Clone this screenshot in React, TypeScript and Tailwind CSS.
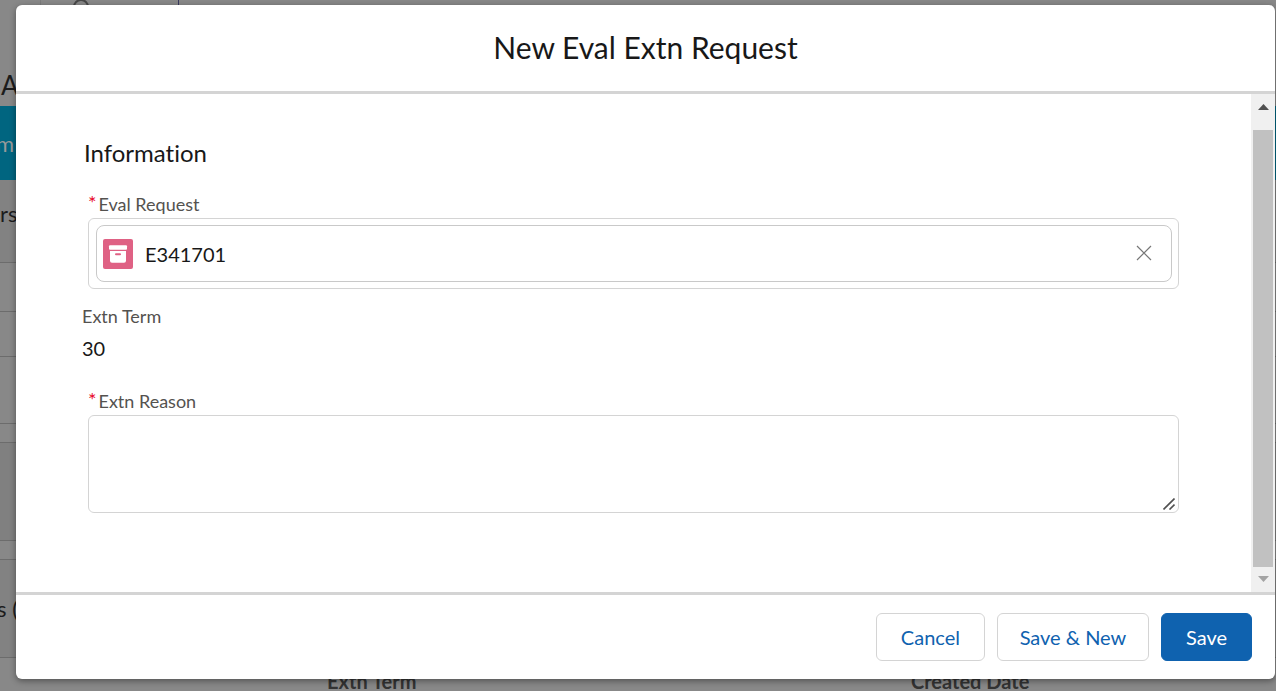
import React from "react";

function PageBehind() {
  return (
    <div aria-hidden="true" className="flex h-full flex-col overflow-hidden text-[#1c1c1c]">
      <div className="flex h-[66px] shrink-0 items-start">
        <div className="h-full w-[41px] border-r border-[#7b7b7b]" />
        <svg className="ml-8 h-6 w-4 shrink-0" viewBox="0 0 16 24" fill="none" stroke="#484848" strokeWidth="2">
          <circle cx="8" cy="7" r="7" />
        </svg>
        <div className="ml-[89px] h-[5px] w-px bg-[#3a3a60]" />
      </div>
      <div className="h-10 shrink-0 pl-px text-[26px] leading-[38px]">A</div>
      <div className="flex h-[74px] shrink-0 items-center bg-[#006580] text-[22px] text-[#9a9a9a]">
        <span className="-ml-1">m</span>
      </div>
      <div className="h-[83px] shrink-0 border-b border-[#6c6c6c] bg-[#828282] text-[22px] leading-[68px]">rs</div>
      <div className="h-[49px] shrink-0 border-b border-[#6c6c6c]" />
      <div className="h-[45px] shrink-0 border-b border-[#6c6c6c]" />
      <div className="h-[67px] shrink-0 border-b border-[#6c6c6c]" />
      <div className="h-[19px] shrink-0 border-b border-[#6c6c6c]" />
      <div className="h-[98px] shrink-0 border-b border-[#6c6c6c] bg-[#808080]" />
      <div className="h-[19px] shrink-0 border-b border-[#6c6c6c]" />
      <div className="h-[98px] shrink-0 border-b border-[#6c6c6c] bg-[#828282] text-[22px] leading-[98px]">
        <span className="-ml-[3px]">s (</span>
      </div>
      <div className="grid grid-cols-[327px_584px_1fr] text-xl leading-[46px] font-bold text-[#333]">
        <span />
        <span>Extn Term</span>
        <span>Created Date</span>
      </div>
    </div>
  );
}

function FieldLabel({ htmlFor, children }: { htmlFor: string; children: React.ReactNode }) {
  return (
    <label htmlFor={htmlFor} className="flex h-7 gap-[2px] text-lg leading-7 text-[#54524f]">
      <span className="text-xl leading-6 text-[#e8082c]">*</span>
      {children}
    </label>
  );
}

function ScrollBar() {
  return (
    <div aria-hidden="true" className="flex w-6 shrink-0 flex-col items-center bg-[#f0f0f0]">
      <svg className="h-9 w-6 shrink-0" viewBox="0 0 24 36" fill="#505050">
        <path d="M7 16 L12.5 10 L18 16Z" />
      </svg>
      <div className="w-5 flex-1 bg-[#c1c1c1]" />
      <svg className="h-[25px] w-6 shrink-0" viewBox="0 0 24 25" fill="#a3a3a3">
        <path d="M7 9 L12.5 15 L18 9Z" />
      </svg>
    </div>
  );
}

export default function App() {
  return (
    <div className="relative h-screen overflow-hidden bg-[#888] font-['Lato',sans-serif] [font-variant-ligatures:none]">
      <PageBehind />
      <div className="absolute inset-0 flex pt-[5px] pr-px pb-3 pl-4">
        <section
          role="dialog"
          aria-modal="true"
          aria-labelledby="dialog-title"
          className="flex min-w-0 flex-1 flex-col overflow-hidden rounded-md bg-white text-[#181818] shadow-[0_2px_6px_rgba(0,0,0,0.4)]"
        >
          <header className="border-b-3 border-[#d4d4d4] px-4 pt-5 pb-[22px] text-center">
            <h1 id="dialog-title" className="text-[30px] leading-[44px]">New Eval Extn Request</h1>
          </header>
          <div className="flex min-h-0 flex-1">
            <form id="request-form" className="min-w-0 flex-1 pt-11 pr-[72px] pl-[66px]">
              <h2 className="pl-[2px] text-2xl leading-[30px]">Information</h2>
              <div className="mt-[22px] pl-[6px]">
                <FieldLabel htmlFor="eval-request">Eval Request</FieldLabel>
                <div className="rounded-md border border-[#d4d4d4] py-[6px] pr-[6px] pl-[7px]">
                  <div className="flex h-[57px] items-center rounded-lg border border-[#c9c9c9] pt-px pr-[18px] pl-[6px]">
                    <svg className="h-[30px] w-[30px] shrink-0" viewBox="0 0 30 30">
                      <rect width="30" height="30" rx="2" fill="#df6184" />
                      <rect x="6" y="6.3" width="18" height="4.4" rx="1" fill="#fff" />
                      <path d="M7 12h16v9.8a2 2 0 0 1-2 2H9a2 2 0 0 1-2-2z" fill="#fff" />
                      <rect x="12" y="14.2" width="6" height="2" rx="1" fill="#df6184" />
                    </svg>
                    <input
                      id="eval-request"
                      readOnly
                      defaultValue="E341701"
                      className="ml-3 min-w-0 flex-1 text-xl leading-7 outline-none"
                    />
                    <button type="button" aria-label="Clear selection" className="px-px pb-[2px]">
                      <svg className="h-4 w-4" viewBox="0 0 16 16" stroke="#777" strokeWidth="1.2">
                        <path d="M1 1 L15 15 M15 1 L1 15" />
                      </svg>
                    </button>
                  </div>
                </div>
              </div>
              <dl className="mt-[15px]">
                <dt className="text-lg leading-6 text-[#54524f]">Extn Term</dt>
                <dd className="mt-1 text-xl leading-8">30</dd>
              </dl>
              <div className="mt-[23px] pl-[6px]">
                <FieldLabel htmlFor="extn-reason">Extn Reason</FieldLabel>
                <div className="relative">
                  <textarea
                    id="extn-reason"
                    className="block h-[98px] w-full resize-none rounded-md border border-[#d4d4d4] p-3 text-xl outline-none"
                  />
                  <svg className="pointer-events-none absolute right-1 bottom-[3px] h-3 w-3" viewBox="0 0 12 12" stroke="#505050" strokeWidth="1.6">
                    <path d="M0.5 11.5 L11.5 0.5 M6.5 11.5 L11.5 6.5" />
                  </svg>
                </div>
              </div>
            </form>
            <ScrollBar />
          </div>
          <footer className="flex justify-end gap-3 border-t-3 border-[#d4d4d4] pt-[18px] pr-[23px] pb-[18px] text-xl text-[#0f62af]">
            <button type="button" className="h-12 rounded-md border border-[#d4d4d4] px-6">Cancel</button>
            <button type="button" className="h-12 w-[152px] rounded-md border border-[#d4d4d4]">Save &amp; New</button>
            <button type="submit" form="request-form" className="h-12 rounded-md border border-[#0f62af] bg-[#0f62af] px-6 text-white">Save</button>
          </footer>
        </section>
      </div>
    </div>
  );
}
